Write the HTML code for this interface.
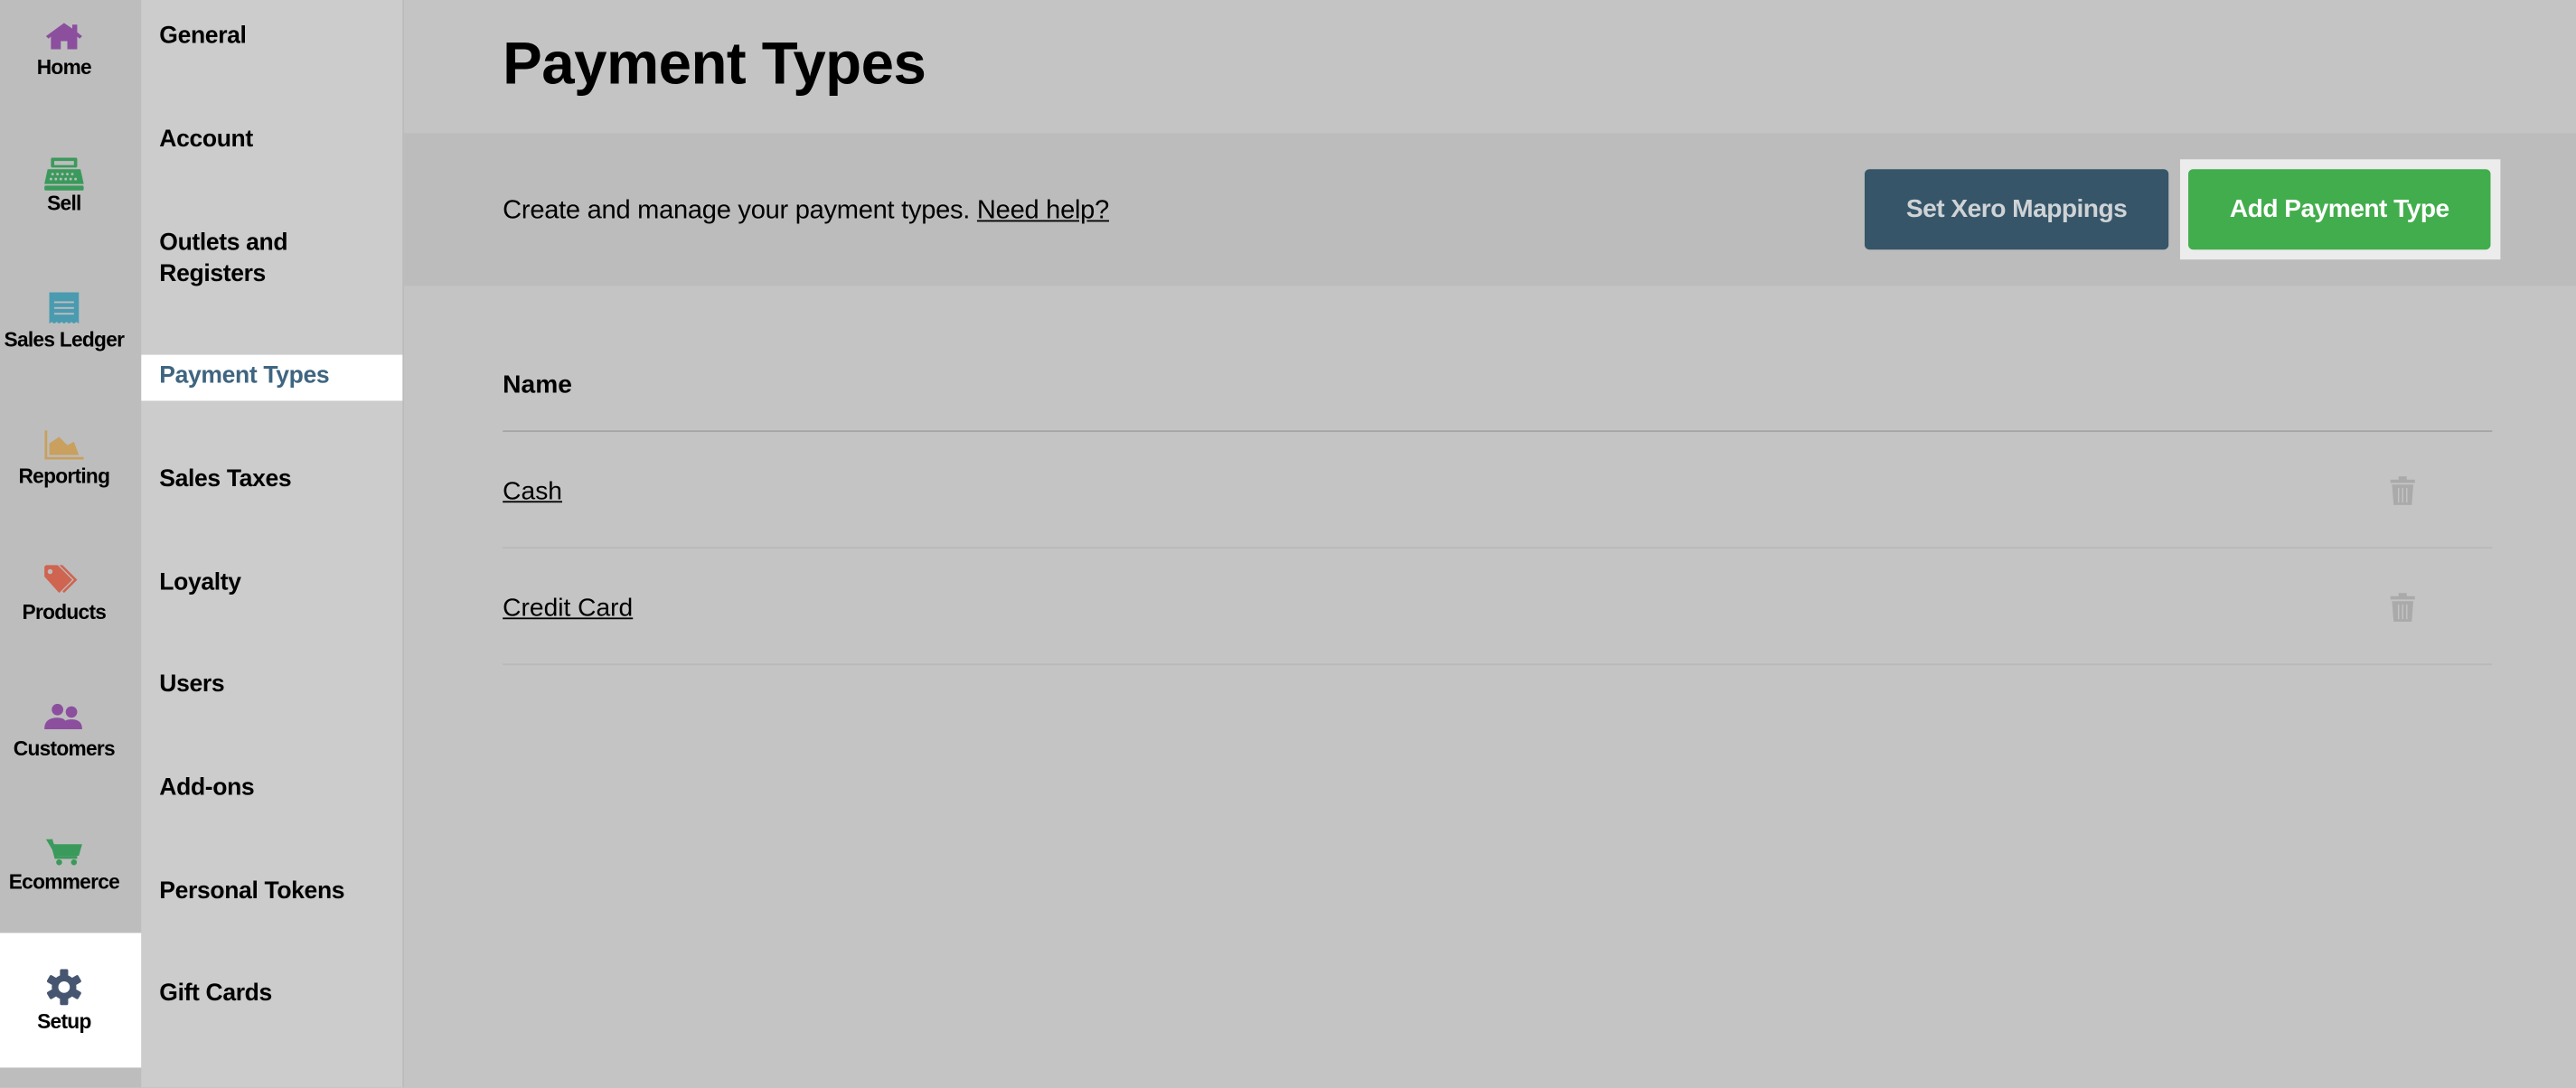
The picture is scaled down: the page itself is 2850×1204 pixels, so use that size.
<!DOCTYPE html>
<html><head><meta charset="utf-8"><style>
html,body{margin:0;padding:0;width:2850px;height:1204px;overflow:hidden;background:#c4c4c4;}
#w{position:absolute;left:0;top:0;width:1568px;height:662px;transform:scale(1.81760);transform-origin:0 0;font-family:"Liberation Sans",sans-serif;color:#000;}
.a{position:absolute;}
.sb{left:0;top:0;width:86px;height:662px;background:#bdbdbd;}
.it{position:absolute;left:0;width:78px;text-align:center;font-weight:bold;font-size:12.5px;letter-spacing:-0.4px;}
.it svg{display:block;margin:0 auto;}
.nav{left:86px;top:0;width:159px;height:662px;background:#cccccc;border-right:1px solid #bbb;}
.ni{position:absolute;left:11px;font-weight:bold;font-size:14.6px;line-height:19px;letter-spacing:-0.2px;}
.u{text-decoration:underline;}
</style></head><body><div id="w">
<div class="a sb"></div>
<div class="a" style="left:0;top:568px;width:86px;height:82px;background:#fff"></div>
<div class="it" style="top:14px"><svg width="22" height="16" viewBox="0 0 22 16"><path d="M11 0L0 8l1.5 1.5L3 8.3V16h6v-5h4v5h6V8.3l1.5 1.2L22 8l-3-2.3V1h-3v2.4z" fill="#8b4f9e"/></svg><div style="margin-top:4px">Home</div></div>
<div class="it" style="top:96px"><svg width="24" height="20" viewBox="0 0 24 20"><rect x="4" y="0" width="16" height="6" rx="1" fill="#3a9a5b"/><rect x="6" y="2" width="12" height="2.5" fill="#bdbdbd"/><path d="M2 7h20l2 9H0z" fill="#3a9a5b"/><rect x="0" y="17" width="24" height="3" rx="1" fill="#3a9a5b"/><g fill="#bdbdbd"><circle cx="5" cy="10" r=".8"/><circle cx="8" cy="10" r=".8"/><circle cx="11" cy="10" r=".8"/><circle cx="14" cy="10" r=".8"/><circle cx="17" cy="10" r=".8"/><circle cx="4" cy="13" r=".8"/><circle cx="7" cy="13" r=".8"/><circle cx="10" cy="13" r=".8"/><circle cx="13" cy="13" r=".8"/><circle cx="16" cy="13" r=".8"/><circle cx="19" cy="13" r=".8"/></g></svg><div style="margin-top:1px">Sell</div></div>
<div class="it" style="top:178px"><svg width="20" height="20" viewBox="0 0 20 20"><path d="M1 0h18v19l-1.5-1-1.5 1-1.5-1-1.5 1-1.5-1-1.5 1-1.5-1-1.5 1-1.5-1-1.5 1-1.5-1L1 19z" fill="#4a9bb0"/><g stroke="#bdbdbd" stroke-width="1"><path d="M4 6h12M4 9.5h12M4 13h12"/></g></svg><div style="margin-top:2px">Sales Ledger</div></div>
<div class="it" style="top:262px"><svg width="24" height="18" viewBox="0 0 24 18"><path d="M1 0v17h23" stroke="#c9a05e" stroke-width="1.5" fill="none"/><path d="M3 15V8l6-4 5 5 4-2 3 8z" fill="#c9a05e"/></svg><div style="margin-top:3px">Reporting</div></div>
<div class="it" style="top:344px"><svg width="24" height="18" viewBox="0 0 24 18"><path d="M0 1v6l9 10 8-8-9-9H1z" fill="#cf6450"/><path d="M11 0l9 9-8 8-1-1 7-7-9-9z" fill="#cf6450"/><circle cx="3.5" cy="4" r="1.5" fill="#bdbdbd"/></svg><div style="margin-top:4px">Products</div></div>
<div class="it" style="top:428px"><svg width="24" height="16" viewBox="0 0 24 16"><circle cx="8" cy="4" r="3.5" fill="#8b4f9e"/><circle cx="16.5" cy="5.5" r="3.5" fill="#8b4f9e"/><path d="M0 16c0-5 3-7 8-7 3 0 5 1 5 3v4z" fill="#8b4f9e"/><path d="M10 16c0-4 2-6 6.5-6S23 12 23 16z" fill="#8b4f9e"/></svg><div style="margin-top:5px">Customers</div></div>
<div class="it" style="top:510px"><svg width="22" height="18" viewBox="0 0 22 18"><path d="M0 1h3l2 3h17l-2 7H6z" fill="#3a9a5b"/><path d="M3 1l3 11h13" stroke="#3a9a5b" stroke-width="1.8" fill="none"/><circle cx="8" cy="15" r="1.8" fill="#3a9a5b"/><circle cx="17" cy="15" r="1.8" fill="#3a9a5b"/></svg><div style="margin-top:2px">Ecommerce</div></div>
<div class="it" style="top:590px"><svg width="22" height="22" viewBox="0 0 22 22"><g fill="#475670"><circle cx="11" cy="11" r="7.5"/><rect x="8.5" y="0" width="5" height="22" rx="1"/><rect x="8.5" y="0" width="5" height="22" rx="1" transform="rotate(60 11 11)"/><rect x="8.5" y="0" width="5" height="22" rx="1" transform="rotate(120 11 11)"/></g><circle cx="11" cy="11" r="3.5" fill="#fff"/></svg><div style="margin-top:3px">Setup</div></div>

<div class="a nav"></div>
<div class="a" style="left:86px;top:216px;width:159px;height:28px;background:#fff"></div>
<div class="a" style="left:86px;top:0;width:159px;height:662px">
<div class="ni" style="top:13px">General</div>
<div class="ni" style="top:76px">Account</div>
<div class="ni" style="top:139px">Outlets and<br>Registers</div>
<div class="ni" style="top:220px;color:#3f6580">Payment Types</div>
<div class="ni" style="top:283px">Sales Taxes</div>
<div class="ni" style="top:346px">Loyalty</div>
<div class="ni" style="top:408px">Users</div>
<div class="ni" style="top:471px">Add-ons</div>
<div class="ni" style="top:534px">Personal Tokens</div>
<div class="ni" style="top:596px">Gift Cards</div>
</div>

<div class="a" style="left:306px;top:17px;font-size:36px;font-weight:bold;letter-spacing:-0.3px;line-height:44px">Payment Types</div>
<div class="a" style="left:246px;top:81px;width:1322px;height:93px;background:#bcbcbc"></div>
<div class="a" style="left:306px;top:119px;font-size:16px;line-height:19px;letter-spacing:-0.15px">Create and manage your payment types. <span class="u">Need help?</span></div>
<div class="a" style="left:1135px;top:103px;width:185px;height:49px;background:#365568;border-radius:3px;color:#cfd3d6;font-weight:bold;font-size:15.5px;line-height:49px;text-align:center;letter-spacing:-0.3px">Set Xero Mappings</div>
<div class="a" style="left:1327px;top:97px;width:195px;height:61px;background:#ececec"></div>
<div class="a" style="left:1332px;top:103px;width:184px;height:49px;background:#42ad4c;border-radius:3px;color:#fff;font-weight:bold;font-size:15.5px;line-height:49px;text-align:center;letter-spacing:-0.3px">Add Payment Type</div>

<div class="a" style="left:306px;top:225px;font-size:15.5px;font-weight:bold;line-height:19px">Name</div>
<div class="a" style="left:306px;top:262px;width:1211px;height:1px;background:#a5a5a5"></div>
<div class="a u" style="left:306px;top:290px;font-size:15.5px;line-height:19px">Cash</div>
<div class="a" style="left:306px;top:333px;width:1211px;height:1px;background:#b9b9b9"></div>
<div class="a u" style="left:306px;top:361px;font-size:15.5px;line-height:19px">Credit Card</div>
<div class="a" style="left:306px;top:404px;width:1211px;height:1px;background:#b9b9b9"></div>
<svg class="a" style="left:1455px;top:290px" width="15" height="18" viewBox="0 0 15 18"><path d="M5 0h5v2h5v2H0V2h5z M1 5h13l-1 12.5H2z" fill="#aaa"/><path d="M5 7v9M7.5 7v9M10 7v9" stroke="#c4c4c4" stroke-width=".8"/></svg>
<svg class="a" style="left:1455px;top:361px" width="15" height="18" viewBox="0 0 15 18"><path d="M5 0h5v2h5v2H0V2h5z M1 5h13l-1 12.5H2z" fill="#aaa"/><path d="M5 7v9M7.5 7v9M10 7v9" stroke="#c4c4c4" stroke-width=".8"/></svg>
</div></body></html>
